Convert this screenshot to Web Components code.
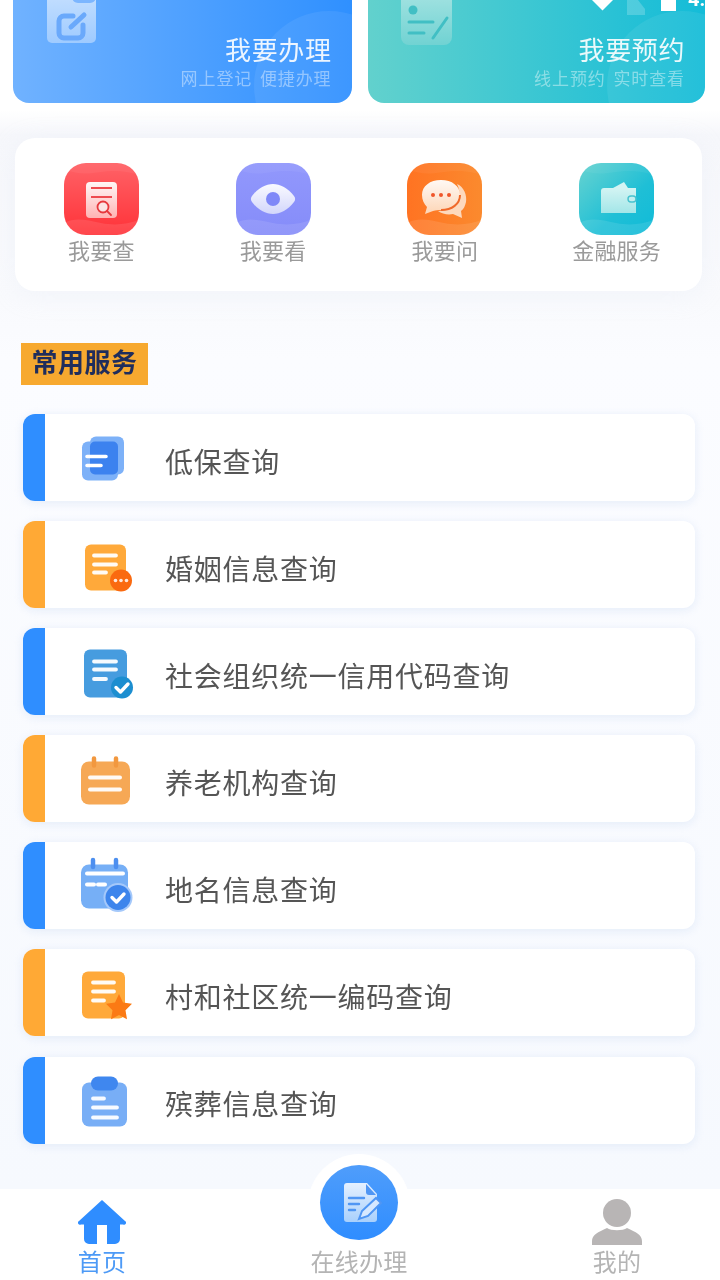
<!DOCTYPE html>
<html lang="zh-CN">
<head>
<meta charset="utf-8">
<title>常用服务</title>
<style>
    html, body {
        margin: 0;
        padding: 0;
        height: 100%;
        overflow: hidden;
        background: #fff;
        font-family: "Noto Sans CJK SC", "Noto Sans", sans-serif;
    }
</style>
</head>
<body>
<app-page>
    <promo-row>
        <promo-card kind="blue" title="我要办理" sub="网上登记 便捷办理"></promo-card>
        <promo-card kind="teal" title="我要预约" sub="线上预约 实时查看"></promo-card>
    </promo-row>
    <quick-panel>
        <quick-item icon="search">我要查</quick-item>
        <quick-item icon="eye">我要看</quick-item>
        <quick-item icon="chat">我要问</quick-item>
        <quick-item icon="wallet">金融服务</quick-item>
    </quick-panel>
    <section-tag>常用服务</section-tag>
    <service-list>
        <service-row color="blue" icon="files">低保查询</service-row>
        <service-row color="orange" icon="marriage">婚姻信息查询</service-row>
        <service-row color="blue" icon="verified">社会组织统一信用代码查询</service-row>
        <service-row color="orange" icon="calendar">养老机构查询</service-row>
        <service-row color="blue" icon="calendarCheck">地名信息查询</service-row>
        <service-row color="orange" icon="star">村和社区统一编码查询</service-row>
        <service-row color="blue" icon="clipboard">殡葬信息查询</service-row>
    </service-list>
    <tab-bar slot="bar"></tab-bar>
    <status-icons slot="status"></status-icons>
</app-page>

<script>
class AppPage extends HTMLElement {
    constructor() {
        super();
        this.attachShadow({ mode: 'open' });
    }

    connectedCallback() {
        this.shadowRoot.innerHTML = `
            <style>
                :host {
                    display: flex;
                    flex-direction: column;
                    height: 1280px;
                    overflow: hidden;
                    position: relative;
                    filter: blur(0.6px);
                    background: linear-gradient(180deg, #fff 0, #fff 110px, #f6f7fb 135px, #f9fafd 300px, #fbfcff 360px, #f6f9fe 1189px);
                }
                .scroll {
                    flex: 1;
                    min-height: 0;
                    overflow: hidden;
                }
            </style>
            <div class="scroll"><slot></slot></div>
            <slot name="bar"></slot>
            <slot name="status"></slot>
        `;
    }
}

class PromoRow extends HTMLElement {
    constructor() {
        super();
        this.attachShadow({ mode: 'open' });
    }

    connectedCallback() {
        this.shadowRoot.innerHTML = `
            <style>
                :host {
                    display: flex;
                    gap: 16px;
                    margin: -37px 15px 0 13px;
                }
            </style>
            <slot></slot>
        `;
    }
}

const PROMO_ICONS = {
    blue: `<svg width="50" height="64" viewBox="0 0 50 64">
        <defs><linearGradient id="g" x1="0" y1="0" x2="0" y2="1"><stop offset="0" stop-color="#cfe5ff" stop-opacity=".9"/><stop offset="1" stop-color="#a9d0ff" stop-opacity=".85"/></linearGradient></defs>
        <rect x="0" y="13" width="49" height="50" rx="5" fill="url(#g)"/>
        <rect x="25" y="0" width="24" height="23" rx="6" fill="#7cb6ff"/>
        <path d="M26 36h-9a5 5 0 0 0-5 5v12a5 5 0 0 0 5 5h14a5 5 0 0 0 5-5v-8" fill="none" stroke="#6aa9fb" stroke-width="5" stroke-linecap="round"/>
        <path d="M24 47L37 35" stroke="#6aa9fb" stroke-width="5" stroke-linecap="round"/>
    </svg>`,
    teal: `<svg width="51" height="65" viewBox="0 0 51 65">
        <defs><linearGradient id="g" x1="0" y1="0" x2="0" y2="1"><stop offset="0" stop-color="#b5e8e6" stop-opacity=".95"/><stop offset="1" stop-color="#74d3d3" stop-opacity=".9"/></linearGradient></defs>
        <rect x="0" y="0" width="51" height="65" rx="8" fill="url(#g)"/>
        <circle cx="12" cy="30" r="4.500" fill="#41bfc4"/>
        <path d="M8 42h24M8 53h15" stroke="#41bfc4" stroke-width="3" stroke-linecap="round"/>
        <path d="M32 58l14-20" stroke="#41bfc4" stroke-width="3" stroke-linecap="round"/>
    </svg>`
};

class PromoCard extends HTMLElement {
    constructor() {
        super();
        this.attachShadow({ mode: 'open' });
    }

    connectedCallback() {
        const kind = this.getAttribute('kind');
        this.shadowRoot.innerHTML = `
            <style>
                :host {
                    display: flex;
                    flex-direction: column;
                    flex: 1;
                    height: 140px;
                    box-sizing: border-box;
                    padding: 17px 20px 14px 34px;
                    border-radius: 16px;
                    overflow: hidden;
                    position: relative;
                    color: #fff;
                }
                :host([kind="blue"]) {
                    background: linear-gradient(90deg, #70b2ff, #2f90ff);
                }
                :host([kind="teal"]) {
                    background: linear-gradient(90deg, #62d1cd, #14bcd8);
                    padding-left: 33px;
                }
                .circle {
                    position: absolute;
                    right: -52px;
                    bottom: -58px;
                    width: 150px;
                    height: 150px;
                    border-radius: 50%;
                    background: rgba(255, 255, 255, 0.07);
                }
                svg {
                    display: block;
                    flex: none;
                    margin-bottom: -40px;
                }
                .text {
                    margin-top: auto;
                    text-align: right;
                    position: relative;
                    white-space: nowrap;
                }
                .title {
                    font-size: 26px;
                    line-height: 36px;
                    letter-spacing: 0.6px;
                    opacity: 0.9;
                }
                .sub {
                    font-size: 17px;
                    line-height: 22px;
                    margin-top: 0;
                    letter-spacing: 0.9px;
                    word-spacing: 3px;
                    opacity: 0.42;
                }
            </style>
            <div class="circle"></div>
            ${PROMO_ICONS[kind]}
            <div class="text">
                <div class="title">${this.getAttribute('title')}</div>
                <div class="sub">${this.getAttribute('sub')}</div>
            </div>
        `;
    }
}

class QuickPanel extends HTMLElement {
    constructor() {
        super();
        this.attachShadow({ mode: 'open' });
    }

    connectedCallback() {
        this.shadowRoot.innerHTML = `
            <style>
                :host {
                    display: grid;
                    grid-template-columns: repeat(4, 1fr);
                    height: 153px;
                    box-sizing: border-box;
                    margin: 35px 18px 0 15px;
                    padding-top: 25px;
                    background: #fff;
                    border-radius: 20px;
                    box-shadow: 0 4px 24px rgba(225, 232, 245, 0.25);
                }
            </style>
            <slot></slot>
        `;
    }
}

const WAVE = `<path d="M0 60c12-6 22-3 37 0s26 1 38-3v15H0z" fill="#fff" fill-opacity=".1"/><path d="M0 6c14 6 24 5 37 3s26-1 38 3V0H0z" fill="#fff" fill-opacity=".05"/>`;

const QUICK_ICONS = {
    search: `<defs>
            <linearGradient id="bg" x1="0" y1="0" x2="0" y2="1"><stop offset="0" stop-color="#ff6267"/><stop offset="1" stop-color="#ff3238"/></linearGradient>
            <linearGradient id="doc" x1="0" y1="0" x2="0" y2="1"><stop offset="0" stop-color="#fff" stop-opacity=".95"/><stop offset="1" stop-color="#ffb3b3"/></linearGradient>
        </defs>
        <rect width="75" height="72" rx="22" fill="url(#bg)"/>${WAVE}
        <rect x="22" y="19" width="31" height="36" rx="4" fill="url(#doc)"/>
        <path d="M27 25h21M27 34h21" stroke="#ee4b50" stroke-width="2.200"/>
        <circle cx="39" cy="44" r="5.500" fill="#fbe3e3" stroke="#e7383d" stroke-width="1.800"/>
        <path d="M43 48l4 4" stroke="#e7383d" stroke-width="1.800" stroke-linecap="round"/>`,
    eye: `<defs>
            <linearGradient id="bg" x1="0" y1="0" x2="0" y2="1"><stop offset="0" stop-color="#9298fc"/><stop offset="1" stop-color="#858cf9"/></linearGradient>
            <linearGradient id="eye" x1="0" y1="0" x2="0" y2="1"><stop offset="0" stop-color="#fff" stop-opacity=".95"/><stop offset="1" stop-color="#d2d6fb"/></linearGradient>
        </defs>
        <rect width="75" height="72" rx="22" fill="url(#bg)"/>${WAVE}
        <path d="M16 33C22 25 30 21 37 21s15 4 21 12c1.500 2 1.500 4 0 6-6 8-14 12-21 12s-15-4-21-12c-1.500-2-1.500-4 0-6z" fill="url(#eye)"/>
        <circle cx="37" cy="36" r="7" fill="#7f88f8"/>`,
    chat: `<defs>
            <linearGradient id="bg" x1="0" y1="0" x2="1" y2="0"><stop offset="0" stop-color="#ff7322"/><stop offset="1" stop-color="#fb8a2e"/></linearGradient>
            <linearGradient id="bub" x1="0" y1="0" x2="0" y2="1"><stop offset="0" stop-color="#fff" stop-opacity=".95"/><stop offset="1" stop-color="#fdd5b5"/></linearGradient>
        </defs>
        <rect width="75" height="72" rx="22" fill="url(#bg)"/>${WAVE}
        <path d="M50 21c7 3 10 11 9 18-1 4-2 7-5 9l1 7-9-4c-5 1-11 0-15-3 10 0 20-5 21-14 1-5 0-9-2-13z" fill="#fdd9bd"/>
        <path d="M34 17c11 0 19 6 19 15s-8 15-19 15c-3 0-5 0-8 1l-8 3 2-7c-3-3-5-7-5-12 0-9 8-15 19-15z" fill="url(#bub)"/>
        <path d="M53 32c0 9-8 15-19 15" fill="none" stroke="#f0692a" stroke-width="2"/>
        <g fill="#f0562a"><circle cx="26" cy="32" r="2"/><circle cx="34" cy="32" r="2"/><circle cx="42" cy="32" r="2"/></g>`,
    wallet: `<defs>
            <linearGradient id="bg" x1="0" y1="0" x2="1" y2="1"><stop offset="0" stop-color="#68d3d0"/><stop offset=".6" stop-color="#1fbfd6"/><stop offset="1" stop-color="#10bbd8"/></linearGradient>
            <linearGradient id="wal" x1="0" y1="0" x2="0" y2="1"><stop offset="0" stop-color="#d3f4f3"/><stop offset="1" stop-color="#a3e6e8"/></linearGradient>
        </defs>
        <rect width="75" height="72" rx="22" fill="url(#bg)"/>${WAVE}
        <path d="M34 25l11-6 4 6z" fill="#d3f4f3"/>
        <path d="M22 28a3 3 0 0 1 3-3h32v25H22z" fill="url(#wal)"/>
        <rect x="49" y="33" width="8" height="6" rx="3" fill="#c4eff0" stroke="#46c3cf" stroke-width="1.400"/>`
};

class QuickItem extends HTMLElement {
    constructor() {
        super();
        this.attachShadow({ mode: 'open' });
    }

    connectedCallback() {
        this.shadowRoot.innerHTML = `
            <style>
                :host {
                    display: flex;
                    flex-direction: column;
                    align-items: center;
                    padding-left: 1px;
                    font-size: 22px;
                    line-height: 28px;
                    letter-spacing: 0.2px;
                    color: #9a9a9a;
                }
                svg {
                    display: block;
                }
            </style>
            <svg width="75" height="72" viewBox="0 0 75 72">${QUICK_ICONS[this.getAttribute('icon')]}</svg>
            <slot></slot>
        `;
    }
}

class SectionTag extends HTMLElement {
    constructor() {
        super();
        this.attachShadow({ mode: 'open' });
    }

    connectedCallback() {
        this.shadowRoot.innerHTML = `
            <style>
                :host {
                    display: flex;
                    align-items: center;
                    justify-content: center;
                    box-sizing: border-box;
                    width: 127px;
                    height: 42px;
                    padding: 0 0 6px;
                    margin: 52px 0 29px 21px;
                    background: #f7a92f;
                    color: #1f2d5c;
                    font-size: 26px;
                    line-height: 36px;
                    letter-spacing: 0.5px;
                    font-weight: 700;
                }
            </style>
            <slot></slot>
        `;
    }
}

class ServiceList extends HTMLElement {
    constructor() {
        super();
        this.attachShadow({ mode: 'open' });
    }

    connectedCallback() {
        this.shadowRoot.innerHTML = `
            <style>
                :host {
                    display: flex;
                    flex-direction: column;
                    gap: 20.1px;
                    margin: 0 25px 0 23px;
                }
            </style>
            <slot></slot>
        `;
    }
}

const LINES = (x1, x2, x3, y1, y2, y3) => `<path d="M${x1} ${y1}H${x2}M${x1} ${y2}H${x2}M${x1} ${y3}H${x3}" stroke="#fff" stroke-width="3.800" stroke-linecap="round" fill="none" opacity=".95"/>`;
const CHECK = (cx, cy) => `<path d="M${cx - 6} ${cy}l4.500 4.500 7.500-8" stroke="#fff" stroke-width="3.400" fill="none" stroke-linecap="round" stroke-linejoin="round"/>`;

const SERVICE_ICONS = {
    files: `<rect x="7" y="13.500" width="36" height="39" rx="6" fill="#7db1f8"/>
        <rect x="15" y="8.500" width="34" height="38" rx="6" fill="#7db1f8"/>
        <rect x="15" y="13.500" width="28" height="33" rx="5" fill="#3c82ef"/>
        <path d="M12 28.500h19M12 37.500h14" stroke="#fff" stroke-width="3.600" stroke-linecap="round"/>`,
    marriage: `<rect x="10" y="9.500" width="41" height="46" rx="6" fill="#ffa93a"/>
        ${LINES(19, 41, 31, 20.5, 29.5, 37.5)}
        <circle cx="46" cy="45.500" r="11" fill="#fa6a10"/>
        <g fill="#fff" opacity=".85"><circle cx="40.500" cy="45.500" r="1.800"/><circle cx="46" cy="45.500" r="1.800"/><circle cx="51.500" cy="45.500" r="1.800"/></g>`,
    verified: `<rect x="9" y="7.500" width="43" height="48" rx="6" fill="#469cdf"/>
        ${LINES(19, 41, 31, 19.5, 27.5, 37)}
        <circle cx="47" cy="45.500" r="11" fill="#1c8ed0"/>
        ${CHECK(47, 45.5)}`,
    calendar: `<rect x="6" y="12.500" width="49" height="43" rx="8" fill="#f6a855"/>
        <path d="M19 9.500v7M41 9.500v7" stroke="#f2983f" stroke-width="4.500" stroke-linecap="round"/>
        <path d="M15 28.500h30M15 40.500h30" stroke="#fff" stroke-width="4" stroke-linecap="round" opacity=".95"/>`,
    calendarCheck: `<rect x="6" y="8.500" width="47" height="44" rx="8" fill="#76aff6"/>
        <path d="M18 4v7M41 4v7" stroke="#4d8fef" stroke-width="4.500" stroke-linecap="round"/>
        <path d="M12 17.500h36M12 28.500h7M23 28.500h7" stroke="#fff" stroke-width="4" stroke-linecap="round"/>
        <circle cx="43" cy="41.500" r="14.500" fill="#a4c8fa"/>
        <circle cx="43" cy="41.500" r="12.500" fill="#3d85ec"/>
        ${CHECK(43, 41.5)}`,
    star: `<rect x="7" y="8.500" width="43" height="47" rx="6" fill="#ffa93a"/>
        ${LINES(18, 39, 29, 19.5, 28.5, 37.5)}
        <path d="M44 31l4 8.500 9 1.300-6.500 6.400 1.500 9-8-4.300-8 4.300 1.500-9-6.500-6.400 9-1.300z" fill="#fb7a14"/>`,
    clipboard: `<rect x="7" y="12.500" width="45" height="44" rx="7" fill="#78aef6"/>
        <rect x="16" y="6.500" width="27" height="14" rx="7" fill="#3f87ef"/>
        ${LINES(18, 42, 29, 47.5, 37.5, 28.5)}`
};

class ServiceRow extends HTMLElement {
    constructor() {
        super();
        this.attachShadow({ mode: 'open' });
    }

    connectedCallback() {
        this.shadowRoot.innerHTML = `
            <style>
                :host {
                    display: flex;
                    align-items: center;
                    height: 87px;
                    border-radius: 12px;
                    background: #fff;
                    overflow: hidden;
                    box-shadow: 0 2px 10px rgba(215, 226, 245, 0.6);
                    font-size: 28px;
                    letter-spacing: 0.75px;
                    color: #555;
                    white-space: nowrap;
                }
                .stripe {
                    align-self: stretch;
                    flex: none;
                    width: 22px;
                    margin-right: 30px;
                }
                :host([color="blue"]) .stripe {
                    background: #2f8eff;
                }
                :host([color="orange"]) .stripe {
                    background: #ffa935;
                }
                svg {
                    display: block;
                    flex: none;
                    margin-right: 30px;
                }
                .label {
                    padding-top: 6px;
                }
            </style>
            <div class="stripe"></div>
            <svg width="60" height="60" viewBox="0 0 60 60">${SERVICE_ICONS[this.getAttribute('icon')]}</svg>
            <div class="label"><slot></slot></div>
        `;
    }
}

class TabBar extends HTMLElement {
    constructor() {
        super();
        this.attachShadow({ mode: 'open' });
    }

    connectedCallback() {
        this.shadowRoot.innerHTML = `
            <style>
                :host {
                    display: grid;
                    grid-template-columns: repeat(3, 257px);
                    justify-content: center;
                    flex: none;
                    height: 91px;
                    background: #fff;
                    position: relative;
                    font-size: 24px;
                    line-height: 34px;
                    letter-spacing: 0.2px;
                    text-align: center;
                    color: #b4b4b4;
                }
                .tab {
                    display: flex;
                    flex-direction: column;
                    align-items: center;
                    justify-content: flex-end;
                    padding-bottom: 2px;
                    position: relative;
                }
                .home {
                    color: #4d9af6;
                    transform: translateX(-1px);
                }
                .tab svg {
                    display: block;
                }
                .me svg {
                    margin-bottom: -1px;
                }
                .center {
                    transform: translateX(-1px);
                }
                .halo {
                    position: absolute;
                    left: 50%;
                    top: -35px;
                    width: 102px;
                    height: 102px;
                    margin-left: -51px;
                    border-radius: 50%;
                    background: #fff;
                }
                .button {
                    position: absolute;
                    left: 50%;
                    top: -24px;
                    width: 78px;
                    height: 75px;
                    margin-left: -39px;
                    border-radius: 50%;
                    background: linear-gradient(180deg, #4f9dfb, #2f8dff);
                }
                .label {
                    position: relative;
                }
            </style>
            <div class="tab home">
                <svg width="48" height="44" viewBox="0 0 48 44">
                    <path d="M24 0L47 21a2 2 0 0 1-2 3.500h-3V39a5 5 0 0 1-5 5h-8V25h-10v19h-8a5 5 0 0 1-5-5V24.500H3A2 2 0 0 1 1 21z" fill="#2f8dff"/>
                </svg>
                <div class="label">首页</div>
            </div>
            <div class="tab center">
                <div class="halo"></div>
                <div class="button">
                    <svg width="78" height="75" viewBox="0 0 78 75">
                        <defs><linearGradient id="pd" x1="0" y1="0" x2="0" y2="1"><stop offset="0" stop-color="#e4f0ff"/><stop offset="1" stop-color="#a9d0fc"/></linearGradient></defs>
                        <path d="M27 18h20l10 11v25a3 3 0 0 1-3 3H27a3 3 0 0 1-3-3V21a3 3 0 0 1 3-3z" fill="url(#pd)"/>
                        <path d="M46 19l10 11h-7a3 3 0 0 1-3-3z" fill="#4f96f4"/>
                        <path d="M29 33h15M29 39h10M29 45h6" stroke="#4f96f4" stroke-width="2.400" stroke-linecap="round"/>
                        <path d="M39 54l3-8 14-13 5 5-13 13z" fill="#d6e8ff" stroke="#4f96f4" stroke-width="2"/>
                    </svg>
                </div>
                <div class="label">在线办理</div>
            </div>
            <div class="tab me">
                <svg width="50" height="46" viewBox="0 0 50 46">
                    <ellipse cx="25" cy="14" rx="14" ry="14" fill="#b8b5b5"/>
                    <path d="M0 46V42C0 36 6 33 15 29 19 32 31 32 35 29 44 33 50 36 50 42V46z" fill="#b8b5b5"/>
                </svg>
                <div class="label">我的</div>
            </div>
        `;
    }
}

class StatusIcons extends HTMLElement {
    constructor() {
        super();
        this.attachShadow({ mode: 'open' });
    }

    connectedCallback() {
        this.shadowRoot.innerHTML = `
            <style>
                :host {
                    display: block;
                    position: absolute;
                    top: 0;
                    left: 0;
                    right: 0;
                    height: 16px;
                    overflow: hidden;
                }
                svg {
                    position: absolute;
                    left: 585px;
                    top: 0;
                }
                .time {
                    position: absolute;
                    left: 688px;
                    top: -14px;
                    font-size: 20px;
                    line-height: 26px;
                    font-weight: 700;
                    color: #fff;
                    font-family: Roboto, "Noto Sans", sans-serif;
                }
            </style>
            <svg width="100" height="16" viewBox="0 0 100 16">
                <path d="M7 0h21l-10.500 10.500z" fill="#fff"/>
                <path d="M42 0h11l7 9v6H42z" fill="#fff" fill-opacity=".2"/>
                <rect x="76" y="0" width="15" height="11" fill="#fff"/>
            </svg>
            <div class="time">4:</div>
        `;
    }
}

customElements.define('app-page', AppPage);
customElements.define('promo-row', PromoRow);
customElements.define('promo-card', PromoCard);
customElements.define('quick-panel', QuickPanel);
customElements.define('quick-item', QuickItem);
customElements.define('section-tag', SectionTag);
customElements.define('service-list', ServiceList);
customElements.define('service-row', ServiceRow);
customElements.define('tab-bar', TabBar);
customElements.define('status-icons', StatusIcons);
</script>
</body>
</html>
